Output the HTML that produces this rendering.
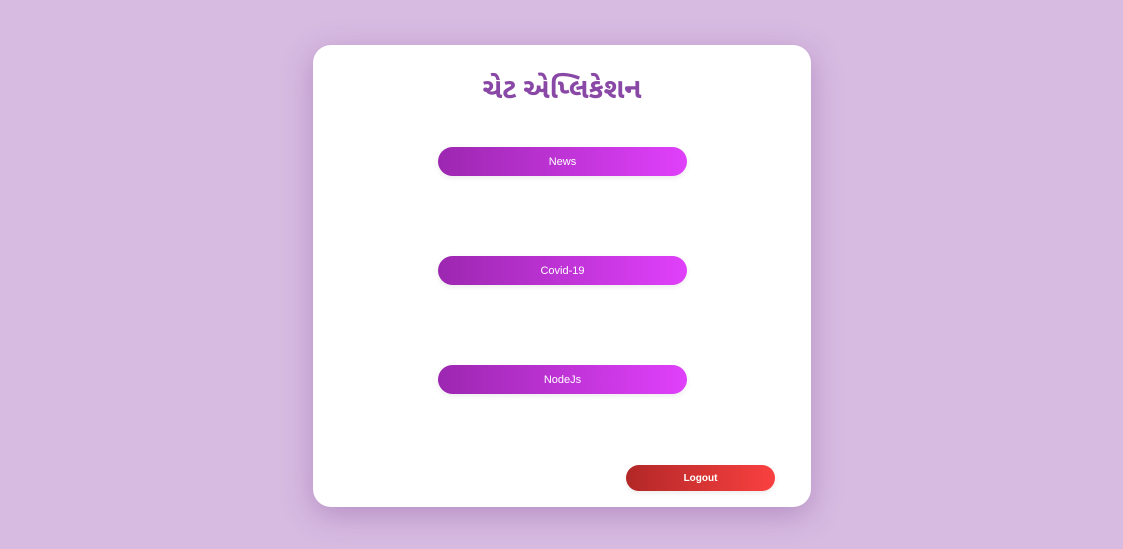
<!DOCTYPE html>
<html><head><meta charset="utf-8"><style>
html,body{margin:0;padding:0;width:1123px;height:549px;background:#d7bbe1;overflow:hidden;font-family:"Liberation Sans",sans-serif}
.card{position:absolute;left:313px;top:45px;width:498px;height:462px;background:#fff;border-radius:18px;box-shadow:0 8px 30px rgba(120,60,140,.35)}
h1{position:absolute;left:0;right:0;top:29px;margin:0;text-align:center;font-size:28px;font-weight:bold;color:#8a48a6;font-family:"Noto Sans Gujarati","Lohit Gujarati","Liberation Sans",sans-serif}
.b{position:absolute;left:125px;width:249px;height:29px;border-radius:15px;background:linear-gradient(90deg,#9c27b0,#e040fb);color:#fff;font-size:11px;text-align:center;line-height:30px;box-shadow:0 2px 6px rgba(0,0,0,.08)}
.l{position:absolute;left:313px;top:420px;width:149px;height:26px;border-radius:13px;background:linear-gradient(90deg,#b22727,#fa4040);color:#fff;font-size:10px;font-weight:bold;text-align:center;line-height:27px;box-shadow:0 2px 6px rgba(0,0,0,.08)}
</style></head><body>
<div class="card">
<h1>ચેટ એપ્લિકેશન</h1>
<div class="b" style="top:102px">News</div>
<div class="b" style="top:211px">Covid-19</div>
<div class="b" style="top:320px">NodeJs</div>
<div class="l">Logout</div>
</div>
</body></html>
